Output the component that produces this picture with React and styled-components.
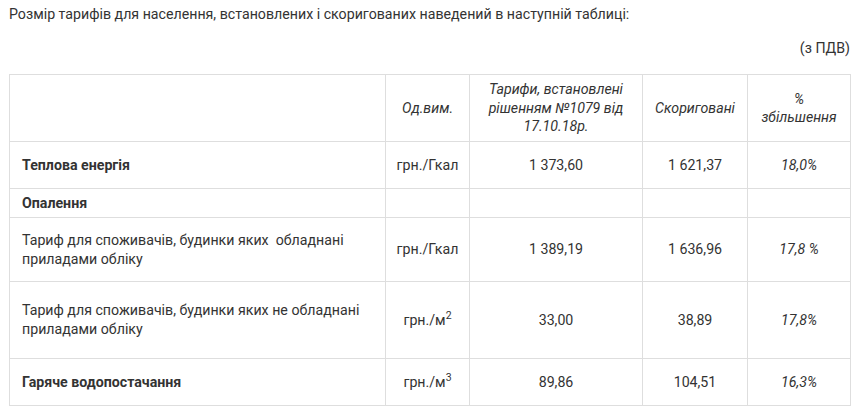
import styled, { createGlobalStyle } from 'styled-components'

const Global = createGlobalStyle`
  body {
    margin: 0;
    background: #fff;
    font-family: Roboto, "Liberation Sans", Arial, sans-serif;
    color: #333;
  }
`

const rows = [
  { name: 'Теплова енергія', bold: true, unit: 'грн./Гкал', old: '1 373,60', fixed: '1 621,37', pct: '18,0%', h: 47 },
  { name: 'Опалення', bold: true, h: 29 },
  { name: 'Тариф для споживачів, будинки яких \u00a0обладнані приладами обліку', unit: 'грн./Гкал', old: '1 389,19', fixed: '1 636,96', pct: '17,8 %', h: 64 },
  { name: 'Тариф для споживачів, будинки яких не обладнані приладами обліку', unit: 'грн./м', sup: '2', old: '33,00', fixed: '38,89', pct: '17,8%', h: 77 },
  { name: 'Гаряче водопостачання', bold: true, unit: 'грн./м', sup: '3', old: '89,86', fixed: '104,51', pct: '16,3%', h: 47 },
]

const App = () => {
  return (
    <Page>
      <Global />
      <Intro>Розмір тарифів для населення, встановлених і скоригованих наведений в наступній таблиці:</Intro>
      <Note>(з ПДВ)</Note>
      <Table>
        <colgroup>
          <col style={{ width: 376 }} />
          <col style={{ width: 84 }} />
          <col style={{ width: 173 }} />
          <col style={{ width: 105 }} />
          <col style={{ width: 103 }} />
        </colgroup>
        <thead>
          <Row $h={67}>
            <HeadCell></HeadCell>
            <HeadCell>Од.вим.</HeadCell>
            <HeadCell>Тарифи, встановлені рішенням №1079 від 17.10.18р.</HeadCell>
            <HeadCell>Скориговані</HeadCell>
            <HeadCell>%<br />збільшення</HeadCell>
          </Row>
        </thead>
        <tbody>
          {rows.map((r) => (
            <Row key={r.name} $h={r.h}>
              <NameCell $bold={r.bold}>{r.name}</NameCell>
              <Cell>
                {r.unit}
                {r.sup && <Sup>{r.sup}</Sup>}
              </Cell>
              <Cell>{r.old}</Cell>
              <Cell>{r.fixed}</Cell>
              <Cell $italic>{r.pct}</Cell>
            </Row>
          ))}
        </tbody>
      </Table>
    </Page>
  )
}

export default App

const Page = styled.div`
  width: 841px;
  padding: 4px 0 0 9px;
  font-size: 14.2px;
`

const Intro = styled.p`
  margin: 0;
  line-height: 20px;
`

const Note = styled.p`
  margin: 14px 0 0;
  line-height: 20px;
  text-align: right;
`

const Table = styled.table`
  margin-top: 16px;
  width: 841px;
  border-collapse: collapse;
  table-layout: fixed;
  border: 1px solid #dedede;
`

const Row = styled.tr`
  height: ${(p) => p.$h}px;
`

const Cell = styled.td`
  border: 1px solid #dedede;
  padding: 0 8px;
  text-align: center;
  vertical-align: middle;
  line-height: 19px;
  font-style: ${(p) => (p.$italic ? 'italic' : 'normal')};
`

const HeadCell = styled.th`
  border: 1px solid #dedede;
  padding: 0 8px;
  text-align: center;
  vertical-align: middle;
  font-weight: 400;
  font-style: italic;
  line-height: 18.5px;
`

const NameCell = styled(Cell)`
  text-align: left;
  padding: 0 12px;
  font-weight: ${(p) => (p.$bold ? 700 : 400)};
`

const Sup = styled.sup`
  font-size: 10.5px;
  line-height: 0;
  vertical-align: 6px;
`
